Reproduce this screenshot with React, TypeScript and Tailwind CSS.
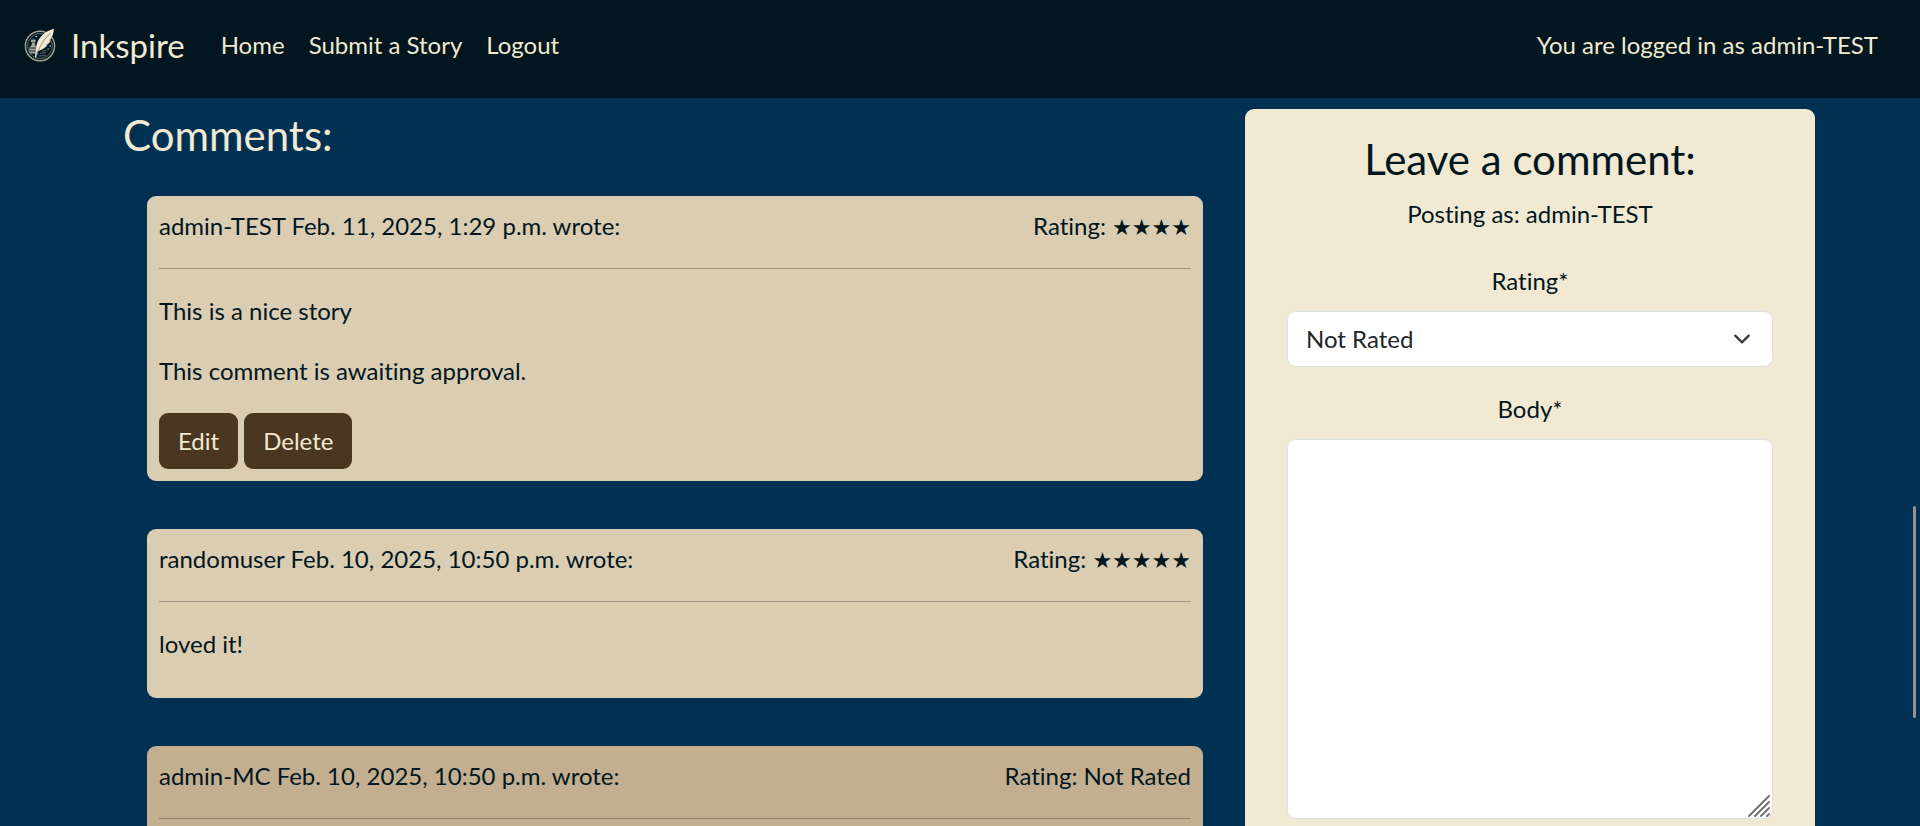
import React from "react";

type Comment = {
  author: string;
  date: string;
  stars: number;
  body?: string;
  pending?: boolean;
  faded?: boolean;
};

const comments: Comment[] = [
  { author: "admin-TEST", date: "Feb. 11, 2025, 1:29 p.m.", stars: 4, body: "This is a nice story", pending: true },
  { author: "randomuser", date: "Feb. 10, 2025, 10:50 p.m.", stars: 5, body: "loved it!" },
  { author: "admin-MC", date: "Feb. 10, 2025, 10:50 p.m.", stars: 0, faded: true },
];

function Logo() {
  return (
    <svg viewBox="0 0 32 34" className="h-[34px] w-8 shrink-0" fill="none" aria-hidden="true">
      <ellipse cx="16" cy="18" rx="14.6" ry="14.8" stroke="#a9a594" strokeWidth="1.4" />
      <ellipse cx="16" cy="18" rx="12.4" ry="12.6" fill="#031c2b" stroke="#6b6e68" strokeWidth="0.9" />
      <path d="M7 11.500h4.500v2.500H7zM7.700 14.500h3.200v2.500l2.600 2.500v6H5.400v-6l2.300-2.500z" fill="#a9a594" />
      <path d="M5.800 20h7M5.800 23h7" stroke="#1b2d35" strokeWidth="1" />
      <path d="M30 1c-6.500 1-13.500 6-16.500 13-1.200 3-1.600 6.500-1.500 9.500 4-.6 8.500-2.800 11.500-6.200l-1.500-.3c2.300-.8 3.800-2.500 4.700-4.500h-1.300c2.700-2.400 4.100-6.700 4.600-11.500z" fill="#f1e9d2" />
      <path d="M26.500 5C20 11 15.500 18 12.300 28.500" stroke="#8b8676" strokeWidth="0.9" />
      <path d="M12.500 22.500l-.9 7" stroke="#f1e9d2" strokeWidth="1.300" />
      <path d="M16 25.500l6-1.200M15 28l7-.5M18.500 23.200l4-.8" stroke="#77786f" strokeWidth="0.8" />
      <path d="M11.500 8.500h1.500M25.500 18h1.400M23.500 21h1.200" stroke="#f1e9d2" strokeWidth="1" />
    </svg>
  );
}

function ActionButton({ children }: { children: React.ReactNode }) {
  return (
    <button type="button" className="h-14 rounded-[9px] bg-[#4b3621] px-[19px] text-[#f1e9d2]">
      {children}
    </button>
  );
}

function Rating({ stars }: { stars: number }) {
  return (
    <span>
      Rating:{" "}
      {stars > 0 ? <span className="font-['DejaVu_Sans',sans-serif] text-[22px] leading-none">{"★".repeat(stars)}</span> : "Not Rated"}
    </span>
  );
}

function CommentCard({ comment }: { comment: Comment }) {
  return (
    <article className={`rounded-[9px] p-3 ${comment.faded ? "bg-[#c3af8f]" : "bg-[#dbcdb2]"}`}>
      <header className="flex flex-wrap justify-between gap-x-6">
        <span>{comment.author} {comment.date} wrote:</span>
        <Rating stars={comment.stars} />
      </header>
      <hr className="my-6 border-[#01161e] opacity-30" />
      <p className="mb-6 min-h-9">{comment.body}</p>
      {comment.pending && (
        <>
          <p className="mb-6">This comment is awaiting approval.</p>
          <div className="flex gap-[6px]">
            <ActionButton>Edit</ActionButton>
            <ActionButton>Delete</ActionButton>
          </div>
        </>
      )}
    </article>
  );
}

function CommentForm() {
  return (
    <form className="flex flex-col rounded-[9px] bg-[#f1e9d2] px-[42px] py-6 text-center">
      <h2 className="mb-[10px] text-[42px] leading-[53px]">Leave a comment:</h2>
      <p className="mb-[31px]">Posting as: admin-TEST</p>
      <label htmlFor="rating" className="mb-3">Rating*</label>
      <div className="relative mb-6">
        <select
          id="rating"
          className="block h-14 w-full appearance-none rounded-[9px] border border-[#dee2e6] bg-white pr-14 pl-[18px] text-[#212529]"
        >
          <option>Not Rated</option>
          <option>★</option>
          <option>★★</option>
          <option>★★★</option>
          <option>★★★★</option>
          <option>★★★★★</option>
        </select>
        <svg
          viewBox="0 0 16 16"
          className="pointer-events-none absolute top-[19px] right-[22px] h-[18px] w-[18px]"
          fill="none"
          stroke="#343a40"
          strokeWidth="2"
          strokeLinecap="round"
          strokeLinejoin="round"
          aria-hidden="true"
        >
          <path d="m2 5 6 6 6-6" />
        </svg>
      </div>
      <label htmlFor="body" className="mb-3">Body*</label>
      <div className="relative mb-6">
        <textarea
          id="body"
          rows={10}
          className="block h-[380px] w-full resize-none rounded-[9px] border border-[#dee2e6] bg-white px-[18px] py-[9px] text-left text-[#212529]"
        />
        <svg
          viewBox="0 0 22 22"
          className="pointer-events-none absolute right-[3px] bottom-[2px] h-[22px] w-[22px]"
          stroke="#6e6e6e"
          strokeWidth="1.9"
          strokeLinecap="round"
          aria-hidden="true"
        >
          <path d="M1 21 21 1M7 21 21 7M13 21l8-8M19 21l2-2" />
        </svg>
      </div>
    </form>
  );
}

export default function App() {
  return (
    <div className="flex h-screen flex-col overflow-hidden bg-[#003153] font-['Lato','DejaVu_Sans',sans-serif] text-[24px] leading-9 text-[#01161e] [font-variant-ligatures:none]">
      <nav className="flex h-[98px] shrink-0 items-center bg-[#01161e] pr-[42px] pb-2 pl-6 text-[#f1e9d2]">
        <a href="#home" className="mr-9 flex items-center gap-[15px]">
          <Logo />
          <span className="text-[33px]">Inkspire</span>
        </a>
        <div className="flex gap-6">
          <a href="#home">Home</a>
          <a href="#submit">Submit a Story</a>
          <a href="#logout">Logout</a>
        </div>
        <span className="ml-auto">You are logged in as admin-TEST</span>
      </nav>
      <main className="grid min-h-0 grid-cols-[minmax(0,1080fr)_minmax(0,570fr)] items-start gap-[42px] pt-[11px] pr-[105px] pl-[123px]">
        <section>
          <h2 className="mb-[34px] text-[42px] leading-[53px] text-[#f1e9d2]">Comments:</h2>
          <div className="flex flex-col gap-12 pl-6">
            {comments.map((comment) => (
              <CommentCard key={comment.author} comment={comment} />
            ))}
          </div>
        </section>
        <CommentForm />
      </main>
      <div className="fixed top-[506px] right-1 h-[212px] w-[3px] rounded-full bg-[#929292]" aria-hidden="true" />
    </div>
  );
}
